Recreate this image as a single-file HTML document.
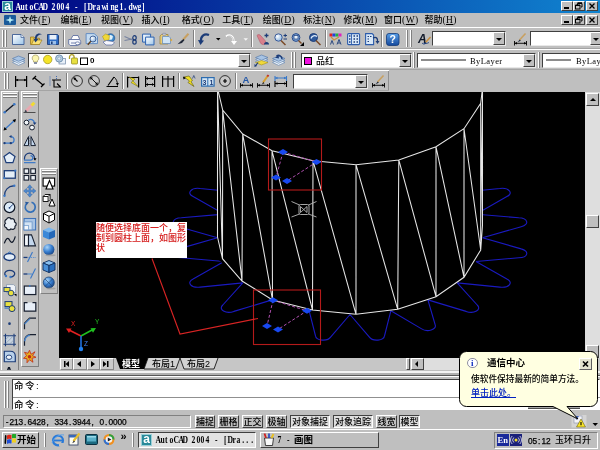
<!DOCTYPE html><html><head><meta charset="utf-8"><title>AutoCAD 2004 - [Drawing1.dwg]</title><style>
*{margin:0;padding:0;box-sizing:border-box}
html,body{width:600px;height:450px;overflow:hidden;background:#bfbfbf}
body{position:relative;font-family:"Liberation Sans","Noto Sans CJK SC",sans-serif;font-size:9px;color:#000;line-height:1;font-weight:500}
.a{position:absolute}
.t{position:absolute;white-space:nowrap;font-size:9px;line-height:10px}
.m{font-family:"Liberation Mono","Noto Sans CJK SC",monospace;font-size:7.5px;transform-origin:0 50%;transform:scaleY(1.25)}
.c{display:inline-block;width:4.5px;text-align:center}
.f{font-family:"Liberation Serif",serif;font-size:9.5px;font-weight:bold}
.f .c{transform:scaleX(0.8)}
.g{font-family:"Liberation Sans",sans-serif;font-size:8.3px;-webkit-text-stroke:0.25px #000}
.r{position:absolute;background:#bfbfbf;border:1px solid;border-color:#fff #404040 #404040 #fff}
.s{position:absolute;border:1px solid;border-color:#808080 #fff #fff #808080}
.cb{position:absolute;background:#fff;border:1px solid;border-color:#404040 #e8e8e8 #e8e8e8 #404040}
.dd{position:absolute;background:#bfbfbf;border:1px solid;border-color:#fff #404040 #404040 #fff}
.dd:after{content:"";position:absolute;left:50%;top:50%;margin:-1px 0 0 -3px;border:3px solid transparent;border-top-color:#000;border-bottom:0}
.gv{position:absolute;width:2px;border-left:1px solid #fff;border-right:1px solid #808080}
.gh{position:absolute;height:2px;border-top:1px solid #fff;border-bottom:1px solid #808080}
.sep{position:absolute;width:2px;border-left:1px solid #808080;border-right:1px solid #fff}
svg{position:absolute;overflow:visible}
</style></head><body><div id="root" style="position:absolute;left:0;top:0;width:600px;height:450px;will-change:transform">
<div class="a" style="left:0;top:0;width:600px;height:13px;background:linear-gradient(90deg,#000080,#1084d0)"></div>
<div class="a" style="left:2px;top:1px;width:11px;height:11px;background:#2a8a9a;border:1px solid #9ad0d8"></div>
<div class="t" style="left:4.300px;top:-1.500px;color:#fff;font-weight:bold;font-size:12px;line-height:14px;font-family:Liberation Sans,sans-serif">a</div>
<div class="t f" style="left:15px;top:1.5px;color:#fff"><span class="c">A</span><span class="c">u</span><span class="c">t</span><span class="c">o</span><span class="c">C</span><span class="c">A</span><span class="c">D</span><span class="c">&nbsp;</span><span class="c">2</span><span class="c">0</span><span class="c">0</span><span class="c">4</span><span class="c">&nbsp;</span><span class="c">-</span><span class="c">&nbsp;</span><span class="c">[</span><span class="c">D</span><span class="c">r</span><span class="c">a</span><span class="c">w</span><span class="c">i</span><span class="c">n</span><span class="c">g</span><span class="c">1</span><span class="c">.</span><span class="c">d</span><span class="c">w</span><span class="c">g</span><span class="c">]</span></div>
<div class="r" style="left:561px;top:1px;width:12px;height:10px"></div>
<div class="a" style="left:564px;top:7px;width:5px;height:2px;background:#000"></div>
<div class="r" style="left:573px;top:1px;width:12px;height:10px"></div>
<svg style="left:573px;top:1px" width="12" height="10"><path d="M4.500 2.500h4.500v3.500h-1M4.500 2.500v1.500" fill="none" stroke="#000" stroke-width="1"/><path d="M4.500 2h4.500" stroke="#000" stroke-width="1.500"/><rect x="2.500" y="4.500" width="4.500" height="3.500" fill="none" stroke="#000" stroke-width="1"/><path d="M2.500 4.200h4.500" stroke="#000" stroke-width="1.500"/></svg>
<div class="r" style="left:586px;top:1px;width:12px;height:10px"></div>
<svg style="left:586px;top:1px" width="12" height="10"><path d="M3.500 2.500l5 5M8.500 2.500l-5 5" stroke="#000" stroke-width="1.300"/></svg>
<div class="a" style="left:4px;top:15px;width:12px;height:10px;background:#1a5a9a;border-radius:1px"></div>
<svg style="left:4px;top:15px" width="12" height="10"><path d="M6 1l1 3l3.500 1l-3.500 1l-1 3l-1-3l-3.500-1l3.500-1z" fill="#b8f0f8"/></svg>
<div class="t" style="left:20.0px;top:15px">文件<span style="font-family:Liberation Serif,serif;font-size:9.5px;letter-spacing:0.4px">(<u>F</u>)</span></div>
<div class="t" style="left:60.5px;top:15px">编辑<span style="font-family:Liberation Serif,serif;font-size:9.5px;letter-spacing:0.4px">(<u>E</u>)</span></div>
<div class="t" style="left:100.9px;top:15px">视图<span style="font-family:Liberation Serif,serif;font-size:9.5px;letter-spacing:0.4px">(<u>V</u>)</span></div>
<div class="t" style="left:141.4px;top:15px">插入<span style="font-family:Liberation Serif,serif;font-size:9.5px;letter-spacing:0.4px">(<u>I</u>)</span></div>
<div class="t" style="left:181.8px;top:15px">格式<span style="font-family:Liberation Serif,serif;font-size:9.5px;letter-spacing:0.4px">(<u>O</u>)</span></div>
<div class="t" style="left:222.2px;top:15px">工具<span style="font-family:Liberation Serif,serif;font-size:9.5px;letter-spacing:0.4px">(<u>T</u>)</span></div>
<div class="t" style="left:262.7px;top:15px">绘图<span style="font-family:Liberation Serif,serif;font-size:9.5px;letter-spacing:0.4px">(<u>D</u>)</span></div>
<div class="t" style="left:303.2px;top:15px">标注<span style="font-family:Liberation Serif,serif;font-size:9.5px;letter-spacing:0.4px">(<u>N</u>)</span></div>
<div class="t" style="left:343.6px;top:15px">修改<span style="font-family:Liberation Serif,serif;font-size:9.5px;letter-spacing:0.4px">(<u>M</u>)</span></div>
<div class="t" style="left:384.1px;top:15px">窗口<span style="font-family:Liberation Serif,serif;font-size:9.5px;letter-spacing:0.4px">(<u>W</u>)</span></div>
<div class="t" style="left:424.5px;top:15px">帮助<span style="font-family:Liberation Serif,serif;font-size:9.5px;letter-spacing:0.4px">(<u>H</u>)</span></div>
<div class="r" style="left:561px;top:15px;width:12px;height:10px"></div>
<div class="a" style="left:564px;top:21px;width:5px;height:2px;background:#000"></div>
<div class="r" style="left:573px;top:15px;width:12px;height:10px"></div>
<svg style="left:573px;top:15px" width="12" height="10"><path d="M4.500 2.500h4.500v3.500h-1M4.500 2.500v1.500" fill="none" stroke="#000" stroke-width="1"/><path d="M4.500 2h4.500" stroke="#000" stroke-width="1.500"/><rect x="2.500" y="4.500" width="4.500" height="3.500" fill="none" stroke="#000" stroke-width="1"/><path d="M2.500 4.200h4.500" stroke="#000" stroke-width="1.500"/></svg>
<div class="r" style="left:586px;top:15px;width:12px;height:10px"></div>
<svg style="left:586px;top:15px" width="12" height="10"><path d="M3.500 2.500l5 5M8.500 2.500l-5 5" stroke="#000" stroke-width="1.300"/></svg>
<div class="a" style="left:0;top:27px;width:600px;height:1px;background:#fff"></div>
<div class="a" style="left:0;top:48px;width:600px;height:1px;background:#a4a4a4"></div>
<div class="a" style="left:0;top:49px;width:600px;height:1px;background:#fff"></div>
<div class="a" style="left:0;top:69px;width:600px;height:1px;background:#a4a4a4"></div>
<div class="a" style="left:388px;top:71px;width:1px;height:19px;background:#909090"></div>
<div class="a" style="left:0;top:70px;width:389px;height:1px;background:#fff"></div>
<div class="a" style="left:0;top:90px;width:389px;height:1px;background:#a4a4a4"></div>
<div class="gv" style="left:2px;top:30px;height:17px"></div>
<div class="gv" style="left:5px;top:30px;height:17px"></div>
<div class="gv" style="left:406px;top:30px;height:17px"></div><div class="gv" style="left:410px;top:30px;height:17px"></div>
<div class="gv" style="left:2px;top:52px;height:16px"></div>
<div class="gv" style="left:5px;top:52px;height:16px"></div>
<div class="gv" style="left:291px;top:52px;height:16px"></div>
<div class="gv" style="left:294px;top:52px;height:16px"></div>
<div class="gv" style="left:413px;top:52px;height:16px"></div>
<div class="gv" style="left:538px;top:52px;height:16px"></div>
<div class="gv" style="left:4px;top:73px;height:16px"></div>
<div class="gv" style="left:7px;top:73px;height:16px"></div>
<div class="sep" style="left:63px;top:30px;height:17px"></div>
<div class="sep" style="left:119px;top:30px;height:17px"></div>
<div class="sep" style="left:193px;top:30px;height:17px"></div>
<div class="sep" style="left:251px;top:30px;height:17px"></div>
<div class="sep" style="left:325px;top:30px;height:17px"></div>
<div class="sep" style="left:381px;top:30px;height:17px"></div>
<div class="sep" style="left:66px;top:73px;height:16px"></div>
<div class="sep" style="left:122px;top:73px;height:16px"></div>
<div class="sep" style="left:178px;top:73px;height:16px"></div>
<div class="sep" style="left:235px;top:73px;height:16px"></div>
<div class="cb" style="left:432px;top:31px;width:74px;height:15px"></div>
<div class="dd" style="left:493px;top:32px;width:12px;height:13px"></div>
<div class="cb" style="left:530px;top:31px;width:73px;height:15px"></div>
<div class="dd" style="left:590px;top:32px;width:12px;height:13px"></div>
<div class="cb" style="left:28px;top:53px;width:223px;height:15px"></div>
<div class="dd" style="left:238px;top:54px;width:12px;height:13px"></div>
<div class="cb" style="left:301px;top:53px;width:111px;height:15px"></div>
<div class="dd" style="left:399px;top:54px;width:12px;height:13px"></div>
<div class="cb" style="left:417px;top:53px;width:119px;height:15px"></div>
<div class="dd" style="left:523px;top:54px;width:12px;height:13px"></div>
<div class="cb" style="left:542px;top:53px;width:70px;height:15px"></div>
<div class="cb" style="left:293px;top:74px;width:75px;height:15px"></div>
<div class="dd" style="left:355px;top:75px;width:12px;height:13px"></div>
<div class="a" style="left:304px;top:57px;width:8px;height:8px;background:#f010e0;border:1px solid #000"></div>
<div class="t" style="left:316px;top:56px">品红</div>
<div class="a" style="left:421px;top:59px;width:45px;height:2px;background:#8c8c8c"></div>
<div class="t m" style="left:470px;top:56px;font-family:'Liberation Serif',serif;font-size:8.5px;transform:none;letter-spacing:0.4px">ByLayer</div>
<div class="a" style="left:546px;top:59px;width:25px;height:2px;background:#8c8c8c"></div>
<div class="t m" style="left:576px;top:56px;font-family:'Liberation Serif',serif;font-size:8.5px;transform:none;letter-spacing:0.4px">ByLayer</div>
<div class="t" style="left:90px;top:56px;font-weight:bold;font-size:8px">0</div>
<div class="a" style="left:0;top:91px;width:59px;height:280px;background:#bfbfbf"></div>
<div class="a" style="left:1px;top:91px;width:18px;height:282px;border:1px solid;border-color:#fff #808080 #808080 #fff"></div>
<div class="gh" style="left:3px;top:93px;width:14px"></div>
<div class="gh" style="left:3px;top:96px;width:14px"></div>
<div class="a" style="left:21px;top:91px;width:18px;height:276px;border:1px solid;border-color:#fff #808080 #808080 #fff"></div>
<div class="gh" style="left:23px;top:93px;width:14px"></div>
<div class="gh" style="left:23px;top:96px;width:14px"></div>
<div class="a" style="left:40px;top:168px;width:18px;height:126px;border:1px solid;border-color:#fff #808080 #808080 #fff"></div>
<div class="gh" style="left:42px;top:170px;width:14px"></div>
<div class="gh" style="left:42px;top:173px;width:14px"></div>
<div class="a" style="left:59px;top:92px;width:526px;height:266px;background:#000"></div>
<svg style="left:0;top:0" width="600" height="450" viewBox="0 0 600 450">
<defs><clipPath id="va"><rect x="59" y="92" width="526" height="266"/></clipPath>
<clipPath id="oc"><path d="M0 0H600V450H0Z M217.5 0V237 222.5 258.7L242.0 281.0L272.5 300.0L312.5 310.0L356.0 314.3L397.7 309.3L436.0 296.7L464.0 277.3L480.7 250.0L482.5 237V0Z" clip-rule="evenodd"/></clipPath></defs>
<g clip-path="url(#va)">
<g clip-path="url(#oc)"><path d="M476.0 214.1L518.7 217.8C528.0 218.1 529.8 224.6 521.2 226.7L482.5 237.8M482.5 237.8L521.2 248.9C529.8 251.0 528.0 257.5 518.7 257.8L476.0 261.5M476.0 261.5L506.9 279.0C514.0 282.5 508.8 288.3 499.8 287.1L457.2 282.9M457.2 282.9L477.2 305.0C482.1 309.6 474.1 314.3 466.1 311.4L427.9 299.9M427.9 299.9L435.1 324.5C437.3 329.7 427.2 332.7 421.2 328.6L390.9 310.7M390.9 310.7L384.6 335.5C384.0 340.9 372.7 341.9 369.2 336.9L350.0 314.5M350.0 314.5L330.8 336.9C327.3 341.9 316.0 340.9 315.4 335.5L309.1 310.7M272.1 299.9L233.9 311.4C225.9 314.3 217.9 309.6 222.8 305.0L242.8 282.9M242.8 282.9L200.2 287.1C191.2 288.3 186.0 282.5 193.1 279.0L224.0 261.5M224.0 261.5L181.3 257.8C172.0 257.5 170.2 251.0 178.8 248.9L217.5 237.8M217.5 237.8L178.8 226.7C170.2 224.6 172.0 218.1 181.3 217.8L224.0 214.1M224.0 214.1L193.1 196.6C186.0 193.1 191.2 187.3 200.2 188.5L242.8 192.7M242.8 192.7L222.8 170.6C217.9 166.0 225.9 161.3 233.9 164.2L272.1 175.7M272.1 175.7L264.9 151.1C262.7 145.9 272.8 142.9 278.8 147.0L309.1 164.9M309.1 164.9L315.4 140.1C316.0 134.7 327.3 133.7 330.8 138.7L350.0 161.1M350.0 161.1L369.2 138.7C372.7 133.7 384.0 134.7 384.6 140.1L390.9 164.9M390.9 164.9L421.2 147.0C427.2 142.9 437.3 145.9 435.1 151.1L427.9 175.7M427.9 175.7L466.1 164.2C474.1 161.3 482.1 166.0 477.2 170.6L457.2 192.7M457.2 192.7L499.8 188.5C508.8 187.3 514.0 193.1 506.9 196.6L476.0 214.1" fill="none" stroke="#1a1ac0" stroke-width="1.1" stroke-linejoin="round"/></g>
<path d="M217.5 88.0L222.7 110.0L242.7 134.0L272.0 150.8L313.0 160.7L356.0 164.7L398.8 159.9L436.0 146.8L464.0 128.7L480.7 103.3L482.5 88.0M217.5 237.0L222.5 258.7L242.0 281.0L272.5 300.0L312.5 310.0L356.0 314.3L397.7 309.3L436.0 296.7L464.0 277.3L480.7 250.0L482.5 225.0M217.5 88.0L217.5 237.0M222.7 110.0L222.5 258.7M242.7 134.0L242.0 281.0M272.0 150.8L272.5 300.0M313.0 160.7L312.5 310.0M356.0 164.7L356.0 314.3M398.8 159.9L397.7 309.3M436.0 146.8L436.0 296.7M464.0 128.7L464.0 277.3M480.7 103.3L480.7 250.0M482.5 88.0L482.5 225.0M217.5 88.0L222.5 258.7M222.7 110.0L242.0 281.0M242.7 134.0L272.5 300.0M272.0 150.8L312.5 310.0M313.0 160.7L356.0 314.3M356.0 164.7L397.7 309.3M398.8 159.9L436.0 296.7M436.0 146.8L464.0 277.3M464.0 128.7L480.7 250.0M480.7 103.3L482.5 225.0" fill="none" stroke="#e6e6e6" stroke-width="1.05"/>
<g fill="none" stroke="#b8b8b8" stroke-width="0.9"><rect x="299" y="204.5" width="10" height="10" rx="1.5"/><path d="M299.5 205l-8-3.500M308.500 205l8-3.500M299.500 214l-8 3M308.500 214l8 3M300.500 206.500l6.500 6v-6l-6.500 6z"/></g>
<g fill="none" stroke="#b41a1a" stroke-width="1.1"><rect x="268.5" y="139" width="53" height="51"/><rect x="253.500" y="290" width="67" height="54.500"/></g><path d="M152 258.500L180 334L258 318.500" fill="none" stroke="#d82424" stroke-width="1.1"/>
<g fill="none" stroke="#b050b0" stroke-width="1" stroke-dasharray="3 2"><path d="M283 152L316.500 162L287 181M283 152L276 177.500M273 300.300L307 310.800L278 329.500M273 300.300L267 326"/></g>
<path d="M278.0 152.0l5 -3l5 3l-5 3zM311.5 162.0l5 -3l5 3l-5 3zM271.0 177.5l5 -3l5 3l-5 3zM282.0 181.0l5 -3l5 3l-5 3zM268.0 300.3l5 -3l5 3l-5 3zM302.0 310.8l5 -3l5 3l-5 3zM262.0 326.0l5 -3l5 3l-5 3zM273.0 329.5l5 -3l5 3l-5 3z" fill="#1848f0"/>
<g stroke-width="1.6" fill="none"><path d="M81 336L69 330" stroke="#e02020"/><path d="M81 336L92 330" stroke="#20c020"/><path d="M81 336V349" stroke="#2070e0"/></g>
<path d="M66 328.500l5.500 0l-2.500 4.500z" fill="#e02020"/><path d="M96 328l-5.500 0.300l2.500 4.500z" fill="#20c020"/><circle cx="81" cy="349" r="2.200" fill="#2080f0"/>
<g font-family="Liberation Sans,sans-serif" font-size="6.500"><text x="71" y="326" fill="#e02020">X</text><text x="95" y="324" fill="#20c020">Y</text><text x="84" y="346" fill="#4080f0">Z</text></g>
</g>
</svg>
<div class="a" style="left:96px;top:222px;width:91px;height:36px;background:#fff"></div>
<div class="t" style="left:96px;top:223px;color:#d41414;font-weight:500;font-size:9px;line-height:10px;white-space:normal;width:92px;letter-spacing:0px">随便选择底面一个，复<br>制到圆柱上面，如图形<br>状</div>
<svg style="left:0;top:0" width="600" height="450" viewBox="0 0 600 450">
<defs><linearGradient id="pg" x1="0" y1="0" x2="1" y2="1"><stop offset="0" stop-color="#ffffff"/><stop offset="1" stop-color="#9cc4e8"/></linearGradient><radialGradient id="lens" cx="0.35" cy="0.35" r="0.7"><stop offset="0" stop-color="#ffffff"/><stop offset="1" stop-color="#8ab4e0"/></radialGradient><linearGradient id="bl" x1="0" y1="0" x2="0" y2="1"><stop offset="0" stop-color="#5aa0e8"/><stop offset="1" stop-color="#14489c"/></linearGradient><radialGradient id="sph" cx="0.35" cy="0.3" r="0.8"><stop offset="0" stop-color="#a8d4f8"/><stop offset="0.500" stop-color="#3a80d0"/><stop offset="1" stop-color="#123c7c"/></radialGradient><clipPath id="tbc"><rect x="0" y="92" width="59" height="279"/></clipPath></defs>
<g transform="translate(12,34)"><path d="M0.500 0.500h8.500l3 3v7h-11.500z" fill="url(#pg)" stroke="#3c5c94" stroke-width="0.900"/><path d="M9 0.500v3h3" fill="#e8f0fa" stroke="#3c5c94" stroke-width="0.700"/></g>
<g transform="translate(30,33)"><path d="M0.500 4h3.500l1 1.200h4.500v6.300h-9z" fill="#e8c448" stroke="#907018" stroke-width="0.700"/><path d="M1.500 11.500l2-4.500h8.500l-2.500 4.500z" fill="#f8e078" stroke="#907018" stroke-width="0.600"/><path d="M12 1.500c-3.500-2.500-7.500 0-7 4.500l-1.800-0.800l2.300 4.300l3-3.800l-1.700 0.200c-0.300-2.500 2-4.500 5.200-4.400z" fill="#1c3c78"/></g>
<g transform="translate(47,34)"><path d="M0.500 0.500h10l1 1v9h-11z" fill="#2e6cc4" stroke="#1c3c78" stroke-width="0.9"/><rect x="2.500" y="1" width="7" height="4.500" fill="#e8f0fa"/><rect x="3" y="7" width="6" height="3.500" fill="#9cc0ea"/><rect x="4" y="7.500" width="1.600" height="2.500" fill="#1c3c78"/></g>
<g transform="translate(68,35)"><path d="M3 4l2-3.500h5l1.500 3.500" fill="#fff" stroke="#52649a" stroke-width="0.8"/><path d="M0.700 4.500h11l1 2v2.500l-3.500 1.500h-7l-1.500-1.500z" fill="#f4f6fc" stroke="#52649a" stroke-width="0.8"/><path d="M3 8h6.500" stroke="#52649a" stroke-width="0.8"/><ellipse cx="9.500" cy="8.300" rx="2.200" ry="1.400" fill="#fff" stroke="#52649a" stroke-width="0.7"/></g>
<g transform="translate(85.5,33)"><path d="M0.600 0.600h8l3.400 3v7h-11.400z" fill="#c4dcf2" stroke="#5a86c0" stroke-width="0.9"/><circle cx="7.500" cy="6" r="3" fill="url(#lens)" stroke="#3a5a90" stroke-width="0.9"/><path d="M5.300 8.300l-3 3.500" stroke="#604020" stroke-width="1.400"/></g>
<g transform="translate(102,33)"><circle cx="8.500" cy="5" r="4.300" fill="#3a86c8" stroke="#1c4c8c" stroke-width="0.6"/><path d="M6 3a3 3 0 0 1 5 0.500l-1 3l-3 0.500z" fill="#dff0fa"/><path d="M0.500 3.500l3-2.500l4 1.500l-0.500 4.500l-4.500 0.500z" fill="#f0d838" stroke="#a08a10" stroke-width="0.5"/><path d="M1 9l3.500-1.500l6.500 1l1.500 1.500l-2.500 2h-6z" fill="#f6f6fc" stroke="#5a6aa0" stroke-width="0.7"/></g>
<g transform="translate(124,35)"><path d="M0.500 1.500l8 3.500M0.500 5.500l8-1.500" stroke="#7884a0" stroke-width="1.100"/><ellipse cx="10.500" cy="2.800" rx="1.700" ry="2.200" fill="none" stroke="#1c3c78" stroke-width="1.200"/><ellipse cx="10.500" cy="7" rx="1.700" ry="2.200" fill="none" stroke="#1c3c78" stroke-width="1.200"/></g>
<g transform="translate(142,33.5)"><path d="M0.600 0.600h8v8h-8z" fill="url(#pg)" stroke="#2c62b0" stroke-width="1"/><path d="M3.600 3.600h8.400v7.800h-8.400z" fill="url(#pg)" stroke="#2c62b0" stroke-width="1"/></g>
<g transform="translate(159,33)"><path d="M2.500 1.500h6.500v9.500h-8v-8z" fill="#e8cc78" stroke="#9a8030" stroke-width="0.7"/><rect x="3.500" y="0.300" width="3.500" height="2" rx="0.800" fill="#c8ccd8" stroke="#6a7088" stroke-width="0.500"/><path d="M3.500 3.500h6.500l1.500 1.500v5.500h-8z" fill="#cfe4f6" stroke="#5a86c0" stroke-width="0.7"/><path d="M11.500 5.500l2 1.500l-2 1.500z" fill="#e8a820"/></g>
<g transform="translate(177,33)"><path d="M11.500 0.800l-5.500 6" stroke="#c8a060" stroke-width="2"/><path d="M6.500 6l-2 1.500l-4 3.800l4.500-1.300l2.500-3z" fill="#202838"/></g>
<g transform="translate(198,33.5)"><path d="M11 1.500c-5-2-8.500 1.500-8 6" fill="none" stroke="#1c3c78" stroke-width="2.200"/><path d="M0 6.500l6 0.500l-3.500 4.500z" fill="#1c3c78"/></g>
<g transform="translate(216,38)"><path d="M0 0h4.500l-2.250 2.500z" fill="#000"/></g>
<g transform="translate(225,34)"><path d="M1 2.500c4-3 8 0 7.500 5" fill="none" stroke="#fff" stroke-width="2"/><path d="M1.800 3c3.500-2.500 7 0 6.500 4.500" fill="none" stroke="#b0b0b0" stroke-width="0.8"/><path d="M6 7l6 0l-3 4z" fill="#fff"/></g>
<g transform="translate(243.5,38.3)"><path d="M0 0h4.500l-2.250 2.500z" fill="#f4f4f4"/></g>
<g transform="translate(256,33)"><path d="M1 2.500c1-1.500 3-1 4 0.500l4 4.500c1 1.500 1 3-0.500 3.800c-1.500 0.700-3 0-4-1.300z" fill="#d8808c" stroke="#b05868" stroke-width="0.6"/><path d="M8.500 2.500h4M10.500 0.500v4" stroke="#1c3c78" stroke-width="1.300"/><path d="M8 11.500a2.500 2.500 0 0 1 5 0z" fill="#1c3c78"/></g>
<g transform="translate(274,33)"><circle cx="4.500" cy="4.500" r="3.700" fill="url(#lens)" stroke="#3a5a98" stroke-width="1"/><path d="M7 7.500l4.500 4.500" stroke="#7a4a28" stroke-width="1.500"/><path d="M9.500 2.500h3.500M11.200 0.800v3.400M9.500 6h3.500" stroke="#1c3c78" stroke-width="1"/></g>
<g transform="translate(291,33)"><circle cx="5" cy="4.500" r="3.900" fill="#7aa4d8" stroke="#2a4a88" stroke-width="1"/><rect x="3" y="2.500" width="4" height="3.500" fill="#e8f2fc" stroke="#1c3c78" stroke-width="0.7"/><path d="M7.500 7.500l3 3" stroke="#7a4a28" stroke-width="1.400"/><path d="M13 9v4h-4z" fill="#000"/></g>
<g transform="translate(308,33)"><circle cx="5.500" cy="4.500" r="4" fill="#2e5a9c" stroke="#1c3c78" stroke-width="1"/><path d="M3 5.500c1-3 4-3.500 6-2" fill="none" stroke="#e0ecfa" stroke-width="1.300"/><path d="M8 7.500l4.500 4.500" stroke="#7a4a28" stroke-width="1.500"/></g>
<g transform="translate(329,33)"><rect x="0.500" y="0.500" width="3" height="3" fill="#e02020"/><rect x="3.500" y="0.500" width="3" height="3" fill="#2040e0"/><rect x="6.500" y="0.500" width="3" height="3" fill="#20b040"/><rect x="9.500" y="0.500" width="3" height="3" fill="#e020c0"/><path d="M2 4l3 3l5-3" fill="none" stroke="#c89040" stroke-width="1.300"/><path d="M1.500 11.500l1.500-4l1.500 4M8 11.500l2-5l2 5M8.800 10h2.400" fill="none" stroke="#1c3c78" stroke-width="0.9"/></g>
<g transform="translate(347,33)"><rect x="0.600" y="0.600" width="12" height="11" rx="1" fill="#d8e8f8" stroke="#2c5cac" stroke-width="1.100"/><path d="M4.500 1v10.500" stroke="#2c5cac" stroke-width="0.9"/><path d="M2 3h1.500M2 6h1.500M2 9h1.500M6.500 3h1.500M9.500 3h1.500M6.500 6h1.500M9.500 6h1.500M6.500 9h1.500M9.500 9h1.500" stroke="#1c3c78" stroke-width="1.400"/></g>
<g transform="translate(365,33)"><path d="M0.600 0.600h6.500l1.500 1.500v9.500h-8z" fill="#d8e8f8" stroke="#2c5cac" stroke-width="1.100"/><path d="M2.500 3.500h1.500M2.500 6h1.500M2.500 8.500h1.500M5 3.500h1.500" stroke="#1c3c78" stroke-width="1.200"/><path d="M8 5c3-1.500 5 0 4.500 3.500" fill="none" stroke="#1c3c78" stroke-width="1.300"/><path d="M10.500 8h4l-2 3z" fill="#1c3c78"/></g>
<g transform="translate(386,33)"><rect x="0.500" y="0.500" width="12.500" height="12" rx="2.500" fill="url(#bl)" stroke="#103878" stroke-width="0.8"/><text x="6.700" y="10.300" text-anchor="middle" font-family="Liberation Sans,sans-serif" font-weight="bold" font-size="10.500" fill="#fff">?</text></g>
<g transform="translate(418,33)"><text x="0" y="10" font-family="Liberation Sans,sans-serif" font-size="12" font-weight="bold" font-style="italic" fill="#101828">A</text><path d="M12.500 4l-5 5.500" stroke="#c89040" stroke-width="1.500"/><path d="M7.500 9l-2.500 3l3.500-1.500z" fill="#1c3c78"/><path d="M4 10.500c2-1 4 1 7-1" fill="none" stroke="#1c3c78" stroke-width="0.8"/></g>
<g transform="translate(514,33)"><path d="M11.500 0.500l-6 6.500" stroke="#c8a060" stroke-width="1.600"/><path d="M5.800 6.500l-2.300 2.800l3.300-1.600z" fill="#202838"/><path d="M0.500 8v4.500M12.500 8v4.500M0.500 10.300h12" stroke="#000" stroke-width="0.9"/><path d="M0.500 10.300l2.500-1.300v2.600zM12.500 10.300l-2.500-1.300v2.600z" fill="#000"/></g>
<g transform="translate(372,75)"><path d="M11.500 0.500l-6 6.500" stroke="#c8a060" stroke-width="1.600"/><path d="M5.800 6.500l-2.300 2.800l3.300-1.600z" fill="#202838"/><path d="M0.500 8v4.500M12.500 8v4.500M0.500 10.300h12" stroke="#000" stroke-width="0.9"/><path d="M0.500 10.300l2.500-1.300v2.600zM12.500 10.300l-2.500-1.300v2.600z" fill="#000"/></g>
<g transform="translate(12,55)"><path d="M0.500 7.500l6-2.500l6.500 2.500l-6.500 2.800z" fill="#f4f8fc" stroke="#6a8cb8" stroke-width="0.7"/><path d="M0.500 5.500l6-2.500l6.500 2.500l-6.500 2.800z" fill="#cfe0f2" stroke="#6a8cb8" stroke-width="0.7"/><path d="M0.500 3.500l6-2.500l6.500 2.500l-6.500 2.800z" fill="#a8c4e4" stroke="#5a7cac" stroke-width="0.7"/></g>
<g transform="translate(32,54.5)"><path d="M3.500 0.500a3.200 3.200 0 0 1 2 5.800v1.200h-4v-1.200a3.200 3.200 0 0 1 2-5.800z" fill="#fbf6b0" stroke="#a09860" stroke-width="0.7"/><rect x="2" y="7.500" width="3" height="2" fill="#8890a0"/></g>
<g transform="translate(43,55)"><circle cx="4.700" cy="4.500" r="4.200" fill="#f4e428" stroke="#a89c20" stroke-width="0.8"/></g>
<g transform="translate(55,54.5)"><rect x="4" y="4" width="6.500" height="5.500" fill="#e8f0f8" stroke="#7088a8" stroke-width="0.7"/><circle cx="4.200" cy="4" r="3.600" fill="#b8d0e4" stroke="#6888a8" stroke-width="0.9"/><circle cx="4.200" cy="4" r="1.600" fill="#dce8f2" stroke="#7898b8" stroke-width="0.600"/></g>
<g transform="translate(68,54)"><path d="M1.500 5v-2a2.300 2.300 0 0 1 4.600 0v1" fill="none" stroke="#b0a028" stroke-width="1.300"/><rect x="3.500" y="4" width="6" height="6" rx="0.800" fill="#e8e040" stroke="#8a8418" stroke-width="0.700"/></g>
<g transform="translate(80,57.5)"><rect x="0.500" y="0.500" width="7" height="6.500" fill="#fff" stroke="#000" stroke-width="1"/></g>
<g transform="translate(255,54)"><path d="M0.500 7.500l6-2.500l6.500 2.500l-6.500 2.800z" fill="#f4f8fc" stroke="#6a8cb8" stroke-width="0.7"/><path d="M0.500 5.500l6-2.500l6.500 2.500l-6.500 2.800z" fill="#cfe0f2" stroke="#6a8cb8" stroke-width="0.7"/><path d="M0.500 3.500l6-2.500l6.500 2.500l-6.500 2.800z" fill="#a8c4e4" stroke="#5a7cac" stroke-width="0.7"/><path d="M0.500 8.500l6-2l6.500 2l-6.500 2.500z" fill="#f0d838" stroke="#a89420" stroke-width="0.600"/><path d="M3 8.500l-2.500 3.500" stroke="#1c3c78" stroke-width="1.200"/><path d="M-0.500 10l0 3l2.500-1z" fill="#1c3c78"/></g>
<g transform="translate(272,55)"><path d="M0.500 7.500l6-2.500l6.500 2.500l-6.500 2.800z" fill="#f4f8fc" stroke="#6a8cb8" stroke-width="0.7"/><path d="M0.500 5.500l6-2.500l6.500 2.500l-6.500 2.800z" fill="#cfe0f2" stroke="#6a8cb8" stroke-width="0.7"/><path d="M0.500 3.500l6-2.500l6.500 2.500l-6.500 2.800z" fill="#a8c4e4" stroke="#5a7cac" stroke-width="0.7"/><path d="M10 4c0-3-3-4.500-5.500-3" fill="none" stroke="#1c3c78" stroke-width="1.500"/><path d="M3 2.800l3.500-2.800l0.500 3.500z" fill="#1c3c78"/></g>
<g transform="translate(15,76)"><path d="M0.600 0v11M11.600 0v11M0.600 4h11" stroke="#000" stroke-width="1.200"/><path d="M0.600 4l2.500-1.300v2.600zM11.600 4l-2.500-1.300v2.600z" fill="#000"/></g>
<g transform="translate(32,76)"><path d="M2 1.500l9 7.500" stroke="#000" stroke-width="1.200"/><path d="M0.500 3.500l3.500-3.500M9 11l3.500-3.500" stroke="#000" stroke-width="1.300"/></g>
<g transform="translate(49,75.5)"><path d="M1 1v10M7.500 0.500v4" stroke="#4068b0" stroke-width="1" stroke-dasharray="1 1"/><path d="M3 4.500h9M5 4.500v7h7M8 8l3.500 3.500" fill="none" stroke="#000" stroke-width="1.100"/></g>
<g transform="translate(71,75)"><circle cx="6" cy="6" r="5.400" fill="#c8c8c8" stroke="#202020" stroke-width="0.9"/><path d="M6.500 6.500l-3.500-3.500" stroke="#000" stroke-width="1.100"/><path d="M2.300 2.300l3 0.800l-2.200 2.200z" fill="#000"/></g>
<g transform="translate(88,75)"><circle cx="6" cy="6" r="5.400" fill="#c8c8c8" stroke="#202020" stroke-width="0.9"/><path d="M2.500 2.500l7 7" stroke="#000" stroke-width="0.900"/><path d="M2 2l3 0.800l-2.200 2.200zM10 10l-3-0.800l2.200-2.200z" fill="#000"/></g>
<g transform="translate(106,76)"><path d="M0.500 10.500h11.500M2 9.500l6-8.500" fill="none" stroke="#000" stroke-width="1.200"/><path d="M8 1c2.500 2 3.500 5 3.500 8" fill="none" stroke="#000" stroke-width="0.9"/><path d="M11.500 10l-1.500-3h2.800z" fill="#000"/></g>
<g transform="translate(127,75.5)"><path d="M0.600 1v11M11.600 1v11M0.600 2h11" stroke="#000" stroke-width="1.200"/><path d="M2 1.500l6 2l-2 2l5 5.500l-7-4l2-1.500z" fill="#f0e020" stroke="#6a6410" stroke-width="0.500"/></g>
<g transform="translate(145,76)"><path d="M0.600 0v11M9.600 0v11M0.600 2.500h9M0.600 8.500h9" stroke="#000" stroke-width="1.200"/><path d="M2.500 1.200v2.600M7.500 1.200v2.600M2.500 7.200v2.600M7.500 7.200v2.600" stroke="#000" stroke-width="0.800"/></g>
<g transform="translate(162,76)"><path d="M0.600 0v11M6 0v11M11.600 0v11M0.600 3h11" stroke="#000" stroke-width="1.200"/></g>
<g transform="translate(183,75)"><path d="M1 2l5-1l3.500 4.500l-1.500 1l3 5l-6-4l1.500-1.500z" fill="#f0e020" stroke="#5a5410" stroke-width="0.600"/><path d="M0 1.500l3 1.500l-2.500 1.500z" fill="#000"/><path d="M9.500 3.500l1.300-3l1.300 3" fill="none" stroke="#1c3c78" stroke-width="0.700"/></g>
<g transform="translate(201,77)"><rect x="0.600" y="0.600" width="12.500" height="8.500" fill="#d4e6f6" stroke="#2c6cb0" stroke-width="1.200"/><path d="M6.800 0.600v8.500" stroke="#2c6cb0" stroke-width="1"/><text x="1.500" y="7.500" font-family="Liberation Sans,sans-serif" font-size="7" font-weight="bold" fill="#1c3c78">3</text><text x="8.500" y="7.500" font-family="Liberation Sans,sans-serif" font-size="7" font-weight="bold" fill="#1c3c78">1</text></g>
<g transform="translate(219,75)"><circle cx="6" cy="6" r="5.400" fill="#c8c8c8" stroke="#202020" stroke-width="0.9"/><path d="M4 6h4M6 4v4" stroke="#000" stroke-width="1.200"/></g>
<g transform="translate(240,75)"><text x="2.500" y="7.500" font-family="Liberation Sans,sans-serif" font-size="9.500" font-weight="bold" fill="#2458a8">A</text><path d="M0.500 8.100000000000001 v4.500M12.500 8.100000000000001 v4.500M0.500 10.3 h12" stroke="#000" stroke-width="0.9"/><path d="M0.500 10.3 l2.500-1.300v2.600zM12.500 10.3 l-2.500-1.300v2.600z" fill="#000"/></g>
<g transform="translate(257,75)"><path d="M11 0.500l-5 7" stroke="#d8a030" stroke-width="2"/><path d="M6.300 7l-1.500 2.500l2.700-1.300z" fill="#202020"/><path d="M11.500 0l-1.200 1.500" stroke="#c03030" stroke-width="2"/><path d="M0.500 8.100000000000001 v4.500M12.500 8.100000000000001 v4.500M0.500 10.3 h12" stroke="#000" stroke-width="0.9"/><path d="M0.500 10.3 l2.500-1.300v2.600zM12.500 10.3 l-2.500-1.300v2.600z" fill="#000"/></g>
<g transform="translate(274,75)"><path d="M1 1v5M12.500 1v5M1 3h11.500" stroke="#3878c8" stroke-width="1.100"/><path d="M1 3l2.500-1.300v2.600zM12.500 3l-2.500-1.300v2.600z" fill="#3878c8"/><path d="M1 6v6M12.500 6v6M1 8.500h11.500" stroke="#000" stroke-width="1.100"/><path d="M1 8.500l2.500-1.300v2.600zM12.500 8.500l-2.500-1.300v2.600z" fill="#000"/></g>
<g transform="translate(3.5,102.0)"><path d="M1 10.500l10-8.500" stroke="#101828" stroke-width="1.300"/><circle cx="1.200" cy="10.300" r="1.300" fill="#3a78c8"/><circle cx="10.800" cy="2.200" r="1.300" fill="#3a78c8"/></g>
<g transform="translate(3.5,118.55)"><path d="M1 11l10.500-9.500" stroke="#3a78c8" stroke-width="1.300"/><path d="M0 12l1-3.500l2.500 2.500zM12.500 0.500l-1 3.500l-2.500-2.500z" fill="#000"/></g>
<g transform="translate(3.5,135.1)"><path d="M0.800 8h6.500a3.200 3.200 0 0 0 0-6.500" fill="none" stroke="#3a78c8" stroke-width="1.300"/><circle cx="1" cy="8" r="1.200" fill="#1c3c78"/><circle cx="7.300" cy="8" r="1.200" fill="#1c3c78"/><path d="M5.500 1.500l2.500-1.500v3z" fill="#1c3c78"/></g>
<g transform="translate(3.5,151.65)"><path d="M6 0.800l5.500 4l-2.100 6.200h-6.800l-2.100-6.200z" fill="#e4eef8" stroke="#1c3c78" stroke-width="1.200"/></g>
<g transform="translate(3.5,168.2)"><rect x="0.800" y="2.500" width="11" height="7.500" fill="#e4eef8" stroke="#1c3c78" stroke-width="1.300"/><circle cx="0.800" cy="10" r="1.100" fill="#3a78c8"/><circle cx="11.800" cy="2.500" r="1.100" fill="#3a78c8"/></g>
<g transform="translate(3.5,184.75)"><path d="M1 11c0-5.500 3.500-9.500 9.500-10" fill="none" stroke="#1c3c78" stroke-width="1.300"/><circle cx="1" cy="11" r="1.200" fill="#3a78c8"/><circle cx="10.800" cy="1" r="1.200" fill="#3a78c8"/></g>
<g transform="translate(3.5,201.3)"><circle cx="6" cy="6" r="5.300" fill="#dcebf8" stroke="#101828" stroke-width="1.200"/><path d="M6 6.500l3.500-3.500" stroke="#1c3c78" stroke-width="1"/><circle cx="6" cy="6.500" r="0.900" fill="#1c3c78"/></g>
<g transform="translate(3.5,217.85000000000002)"><path d="M3 1.500a2.500 2.500 0 0 1 4.500-0.500a2.500 2.500 0 0 1 3.500 3a2.500 2.500 0 0 1 0.500 4.500a2.500 2.500 0 0 1-4 2.500a2.500 2.500 0 0 1-4.500-1a2.500 2.500 0 0 1-1-4.500a2.500 2.500 0 0 1 1-4z" fill="#e8eef4" stroke="#182030" stroke-width="1.200"/></g>
<g transform="translate(3.5,234.4)"><path d="M0.800 9c2-6 4-6 5.500-3s3.500 3 5.500-4" fill="none" stroke="#101828" stroke-width="1.200"/></g>
<g transform="translate(3.5,250.95000000000005)"><ellipse cx="6" cy="6" rx="5.500" ry="3.500" fill="#e4eef8" stroke="#1c3c78" stroke-width="1.400"/><path d="M4 2.500l2-1.500l2 1.500" fill="none" stroke="#3a78c8" stroke-width="1"/></g>
<g transform="translate(3.5,267.5)"><path d="M2 8a5 3.300 0 1 1 5 1.500" fill="none" stroke="#1c3c78" stroke-width="1.300"/><circle cx="2.500" cy="8.500" r="1.200" fill="#3a78c8"/><circle cx="7" cy="9.500" r="1.200" fill="#3a78c8"/></g>
<g transform="translate(3.5,284.05)"><path d="M3 0.500h7l2 2v6h-9z" fill="#eef2f8" stroke="#8090a8" stroke-width="0.700"/><rect x="0.500" y="3.500" width="6" height="4" fill="#e8e040" stroke="#1c3c78" stroke-width="0.900"/><circle cx="7.500" cy="9" r="2.800" fill="#e8e040" stroke="#1c3c78" stroke-width="0.900"/><path d="M10.500 10l2.500 0l0 2.500z" fill="#000"/></g>
<g transform="translate(3.5,300.6)"><rect x="1.500" y="1" width="7" height="5" fill="#e8e040" stroke="#1c3c78" stroke-width="1"/><circle cx="8.500" cy="8" r="3" fill="#e8e040" stroke="#1c3c78" stroke-width="1"/><path d="M1 7.500h4" stroke="#3a78c8" stroke-width="1.200"/></g>
<g transform="translate(3.5,317.15)"><circle cx="6" cy="6.500" r="1.300" fill="#1c3c78"/></g>
<g transform="translate(3.5,333.70000000000005)"><rect x="2" y="2" width="8.500" height="8.500" fill="#c8d4e0"/><path d="M2 0v12.500M10.500 0v12.500M0 2h12.500M0 10.500h12.500" stroke="#1c3c78" stroke-width="1.100"/><path d="M2 6l4-4M2 10l8-8M6 10.500l4.500-4.500" stroke="#8090a8" stroke-width="0.600"/></g>
<g transform="translate(3.5,350.25)"><path d="M0.800 1h6c3 0 5 2 5 5v5.500h-11z" fill="#b8d0ea" stroke="#1c3c78" stroke-width="1.200"/><ellipse cx="5.500" cy="7" rx="2.800" ry="2.200" fill="#eef4fa" stroke="#1c3c78" stroke-width="0.900"/></g>
<text x="5" y="374.500" font-family="Liberation Sans,sans-serif" font-size="11" font-weight="bold" fill="#101828" clip-path="url(#tbc)">A</text>
<g transform="translate(23.5,102.0)"><path d="M0 10.500h12" stroke="#303030" stroke-width="0.800"/><path d="M2.500 9l7-7" stroke="#e8a8b0" stroke-width="3"/><path d="M8 3.500l2.800-2.800" stroke="#f0dc30" stroke-width="3"/><path d="M1 10.200l1-2.500l1.800 1.800z" fill="#384050"/></g>
<g transform="translate(23.5,118.55)"><circle cx="3" cy="4" r="2.400" fill="#f0f4f8" stroke="#182030" stroke-width="1"/><circle cx="8.500" cy="9" r="2.400" fill="#f0f4f8" stroke="#182030" stroke-width="1"/><path d="M5 1.500c3-1.500 5.500 0 6 3" fill="none" stroke="#3a78c8" stroke-width="1.300"/><path d="M9.500 4h3.500l-2 2.500z" fill="#1c3c78"/></g>
<g transform="translate(23.5,135.1)"><path d="M5 1.500v9h-4.500zM7.500 1.500v9h4.500z" fill="#c4d8ee" stroke="#182030" stroke-width="1"/><path d="M6.250 0v12.500" stroke="#5070a0" stroke-width="0.700" stroke-dasharray="1.500 1"/></g>
<g transform="translate(23.5,151.65)"><path d="M1 8v-1.500a5 5 0 0 1 10 0v1.500" fill="none" stroke="#1c3c78" stroke-width="1.200"/><path d="M0.500 8.500h6.500a2.300 2.300 0 0 0 0-4.600" fill="none" stroke="#3a78c8" stroke-width="1.200"/><path d="M0.500 11h11.500" stroke="#3a78c8" stroke-width="1.200"/><path d="M10 6.500l1.500 2.500l1.500-2.500z" fill="#000"/></g>
<g transform="translate(23.5,168.2)"><g fill="#eef2f6" stroke="#182030" stroke-width="1.100"><rect x="0.600" y="0.600" width="4.600" height="4.600"/><rect x="7.300" y="0.600" width="4.600" height="4.600"/><rect x="0.600" y="7.300" width="4.600" height="4.600"/><rect x="7.300" y="7.300" width="4.600" height="4.600"/></g></g>
<g transform="translate(23.5,184.75)"><path d="M6.250 0l2.500 3h-1.700v2.400h2.400v-1.700l3 2.500l-3 2.500v-1.700h-2.400v2.400h1.700l-2.500 3l-2.500-3h1.700v-2.400h-2.400v1.700l-3-2.500l3-2.500v1.700h2.400v-2.400h-1.700z" fill="#4a88d0" stroke="#2a5a9c" stroke-width="0.400"/></g>
<g transform="translate(23.5,201.3)"><path d="M3 2.500a5 5 0 1 0 5-1.500" fill="none" stroke="#3470b8" stroke-width="1.700"/><path d="M1.500 0.500l4 0.500l-2.500 3z" fill="#2a5a9c"/></g>
<g transform="translate(23.5,217.85000000000002)"><rect x="0.600" y="0.600" width="11.500" height="11.500" fill="#a8c4e4" stroke="#3a70b8" stroke-width="1"/><rect x="0.600" y="4" width="8" height="8" fill="#d4e4f4" stroke="#6a94c8" stroke-width="0.800"/><rect x="0.600" y="7.500" width="4.500" height="4.500" fill="#f4f8fc" stroke="#6a94c8" stroke-width="0.700"/></g>
<g transform="translate(23.5,234.4)"><path d="M1 0.500h4v11h-4z" fill="#f4f8fc" stroke="#182030" stroke-width="1.100"/><path d="M5 0.500h3l4 11h-7z" fill="#c4d8ee" stroke="#182030" stroke-width="1.100"/></g>
<g transform="translate(23.5,250.95000000000005)"><path d="M0 6.500h4" stroke="#1c3c78" stroke-width="1.300"/><path d="M5 6.500h7.500" stroke="#5a90d0" stroke-width="1.100" stroke-dasharray="1.300 1"/><path d="M4 11l5-10" stroke="#3a78c8" stroke-width="1.100"/></g>
<g transform="translate(23.5,267.5)"><path d="M0 6.500h4" stroke="#1c3c78" stroke-width="1.300"/><path d="M4 6.500h4.500" stroke="#5a90d0" stroke-width="1.100"/><path d="M7 11l5-10" stroke="#3a78c8" stroke-width="1.100"/></g>
<g transform="translate(23.5,284.05)"><rect x="0.800" y="2" width="11.500" height="8.500" fill="#e8eff8" stroke="#182030" stroke-width="1.200"/><rect x="5.500" y="1" width="1.500" height="1.500" fill="#3a78c8"/></g>
<g transform="translate(23.5,300.6)"><path d="M4 2h-3.200v8.500h11.500v-8.500h-3.300" fill="#e8eff8" stroke="#182030" stroke-width="1.200"/></g>
<g transform="translate(23.5,317.15)"><path d="M1 12v-6l5-5h6.500" fill="none" stroke="#182030" stroke-width="1.200"/><path d="M1 7l5.500-5.500" stroke="#4a88d0" stroke-width="1.300"/></g>
<g transform="translate(23.5,333.70000000000005)"><path d="M1 12v-5a6 6 0 0 1 6-6h5.500" fill="none" stroke="#182030" stroke-width="1.200"/><path d="M1.300 7.500a6 6 0 0 1 5.200-6" fill="none" stroke="#4a88d0" stroke-width="1.400"/></g>
<g transform="translate(23.5,350.25)"><path d="M6 0l1.500 4l4-2.500l-2.500 4l3.500 1.500l-4 1l1 4l-3.500-2.500l-2.500 3l0-4l-3.500-0.500l3-2.500l-2-3.500l3.500 1z" fill="#e8b020" stroke="#c02818" stroke-width="0.800"/><circle cx="6" cy="6.500" r="1.800" fill="#c02818"/></g>
<g transform="translate(42.5,177.5)"><rect x="0.600" y="0.600" width="11.500" height="8" fill="#fff" stroke="#000" stroke-width="1.100"/><path d="M7 3l3.500 8.500h-7z" fill="#fff" stroke="#000" stroke-width="1.100"/></g>
<g transform="translate(42.5,194.0)"><path d="M0.600 2.500l2-2h5v5l-2 2h-5zM0.600 2.500h5v5M5.600 2.500l2-2" fill="#fff" stroke="#000" stroke-width="0.900"/><path d="M9.500 5l3 7h-6z" fill="#fff" stroke="#000" stroke-width="1"/></g>
<g transform="translate(42.5,210.5)"><path d="M6.500 0.500l5.500 2.500v6.500l-5.500 3l-5.500-3v-6.500z" fill="#fff" stroke="#000" stroke-width="1"/><path d="M1 3l5.500 2.800l5.500-2.800M6.500 5.800v6.700" fill="none" stroke="#000" stroke-width="1"/></g>
<g transform="translate(42.5,227.0)"><path d="M0.500 3l6-2.500l6 2.500l-6 2.500z" fill="#7ab8f0"/><path d="M0.500 3l6 2.500v7l-6-2.500z" fill="#3a88d8"/><path d="M12.500 3l-6 2.500v7l6-2.500z" fill="#2468b8"/></g>
<g transform="translate(42.5,243.5)"><circle cx="6.300" cy="6" r="5.600" fill="url(#sph)"/><ellipse cx="8" cy="11.800" rx="5" ry="1" fill="#909090" opacity="0.600"/></g>
<g transform="translate(42.5,260.0)"><path d="M0.500 3l6-2.500l6 2.500l-6 2.500z" fill="#8ac0f0" stroke="#103060" stroke-width="0.900"/><path d="M0.500 3l6 2.500v7l-6-2.500z" fill="#4a90d8" stroke="#103060" stroke-width="0.900"/><path d="M12.500 3l-6 2.500v7l6-2.500z" fill="#2a70c0" stroke="#103060" stroke-width="0.900"/></g>
<g transform="translate(42.5,276.5)"><circle cx="6.300" cy="6" r="5.500" fill="url(#sph)" stroke="#204878" stroke-width="0.800"/><path d="M2.500 2.500l7.500 7.500M10 2.500l-7.500 7.500" stroke="#204878" stroke-width="0.700"/><ellipse cx="8.500" cy="12" rx="4.500" ry="0.900" fill="#909090" opacity="0.600"/></g>

</svg>
<div class="a" style="left:585px;top:92px;width:15px;height:266px;background:#dedede"></div>
<div class="r" style="left:586px;top:93px;width:13px;height:13px"></div>
<div class="a" style="left:590px;top:98px;border:3px solid transparent;border-bottom-color:#000;border-top:0"></div>
<div class="r" style="left:586px;top:215px;width:13px;height:13px"></div>
<div class="r" style="left:586px;top:345px;width:13px;height:13px"></div>
<div class="a" style="left:59px;top:358px;width:541px;height:13px;background:#c6c6c6"></div>
<div class="r" style="left:59.5px;top:358px;width:13.5px;height:12px;border-color:#fff #8a8a8a #8a8a8a #fff;background:#cccccc"></div>
<div class="r" style="left:73.0px;top:358px;width:13.5px;height:12px;border-color:#fff #8a8a8a #8a8a8a #fff;background:#cccccc"></div>
<div class="r" style="left:86.5px;top:358px;width:13.5px;height:12px;border-color:#fff #8a8a8a #8a8a8a #fff;background:#cccccc"></div>
<div class="r" style="left:100.0px;top:358px;width:13.5px;height:12px;border-color:#fff #8a8a8a #8a8a8a #fff;background:#cccccc"></div>
<svg style="left:59px;top:358px" width="56" height="12"><g fill="#000"><path d="M5 3h1.5v6H5zM10 3v6l-3.5-3zM22 3v6l-4-3zM32 3v6l4-3zM44 3v6l3.5-3zM48 3h1.5v6H48z"/></g></svg>
<svg style="left:114px;top:358px" width="110" height="13"><path d="M2 0h32l-4 11h-24z" fill="#000"/><path d="M34 0l-4 11h32l4-11M66 0l4 11h30l4-11" fill="#d2d2d2" stroke="#000" stroke-width="0.8"/></svg>
<div class="t" style="left:122px;top:359px;color:#fff;font-weight:bold">模型</div>
<div class="t" style="left:152px;top:359px">布局1</div>
<div class="t" style="left:187px;top:359px">布局2</div>
<div class="r" style="left:406px;top:358px;width:4px;height:12px"></div>
<div class="r" style="left:411px;top:358px;width:13px;height:12px"></div>
<div class="a" style="left:415px;top:361px;border:3px solid transparent;border-right-color:#000;border-left:0"></div>
<div class="a" style="left:424px;top:358px;width:161px;height:12px;background:#dedede"></div>
<div class="a" style="left:0;top:370px;width:600px;height:8px;background:#bfbfbf"></div>
<div class="a" style="left:0;top:371px;width:600px;height:2px;background:#f4f4f4"></div>
<div class="a" style="left:0;top:373px;width:600px;height:2px;background:#b0b0b0"></div>
<div class="a" style="left:0;top:375px;width:600px;height:1px;background:#585858"></div>
<div class="a" style="left:0;top:376px;width:600px;height:1px;background:#fff"></div>
<div class="gv" style="left:4px;top:381px;height:27px"></div><div class="gv" style="left:7px;top:381px;height:27px"></div>
<div class="a" style="left:12px;top:379px;width:588px;height:31px;background:#fff;border:1px solid;border-color:#404040 #fff #fff #404040"></div>
<div class="a" style="left:13px;top:397px;width:587px;height:1px;background:#909090"></div>
<div class="t" style="left:14px;top:381px;font-size:9.5px;letter-spacing:1.5px">命令:</div>
<div class="t" style="left:14px;top:400px;font-size:9.5px;letter-spacing:1.5px">命令:</div>
<div class="s" style="left:3px;top:415px;width:188px;height:13px"></div>
<div class="t g" style="left:5px;top:417px"><span class="c">-</span><span class="c">2</span><span class="c">1</span><span class="c">3</span><span class="c">.</span><span class="c">6</span><span class="c">4</span><span class="c">2</span><span class="c">8</span><span class="c">,</span><span class="c">&nbsp;</span><span class="c">3</span><span class="c">3</span><span class="c">4</span><span class="c">.</span><span class="c">3</span><span class="c">9</span><span class="c">4</span><span class="c">4</span><span class="c">,</span><span class="c">&nbsp;</span><span class="c">0</span><span class="c">.</span><span class="c">0</span><span class="c">0</span><span class="c">0</span><span class="c">0</span></div>
<div class="r" style="left:195px;top:415px;width:20px;height:13px"></div>
<div class="t" style="left:195px;top:417px;width:20px;text-align:center">捕捉</div>
<div class="r" style="left:218px;top:415px;width:21px;height:13px"></div>
<div class="t" style="left:218px;top:417px;width:21px;text-align:center">栅格</div>
<div class="r" style="left:242px;top:415px;width:21px;height:13px"></div>
<div class="t" style="left:242px;top:417px;width:21px;text-align:center">正交</div>
<div class="r" style="left:266px;top:415px;width:21px;height:13px"></div>
<div class="t" style="left:266px;top:417px;width:21px;text-align:center">极轴</div>
<div class="a" style="left:290px;top:415px;width:40px;height:13px;background:#dedede;border:1px solid;border-color:#404040 #fff #fff #404040"></div>
<div class="t" style="left:290px;top:417px;width:40px;text-align:center">对象捕捉</div>
<div class="a" style="left:333px;top:415px;width:40px;height:13px;background:#dedede;border:1px solid;border-color:#404040 #fff #fff #404040"></div>
<div class="t" style="left:333px;top:417px;width:40px;text-align:center">对象追踪</div>
<div class="r" style="left:376px;top:415px;width:21px;height:13px"></div>
<div class="t" style="left:376px;top:417px;width:21px;text-align:center">线宽</div>
<div class="a" style="left:399px;top:415px;width:21px;height:13px;background:#dedede;border:1px solid;border-color:#404040 #fff #fff #404040"></div>
<div class="t" style="left:399px;top:417px;width:21px;text-align:center">模型</div>
<div class="a" style="left:0;top:429px;width:600px;height:1px;background:#fff"></div>
<div class="r" style="left:2px;top:432px;width:37px;height:16px"></div>
<div class="t" style="left:17px;top:435px;font-weight:bold;font-size:9.5px">开始</div>
<svg style="left:0;top:428px" width="400" height="22" viewBox="0 428 400 22"><g transform="translate(5,434)"><path d="M0 1l1.500 0.500l-0.500 8.500l-1.500-0.500z" fill="#000"/><path d="M2 1.500c2-1.500 3 0 4.500-0.800v4c-1.500 0.800-2.500-0.700-4.500 0.800z" fill="#e02818"/><path d="M7 0.500c1.500-1 2.500 0 4 -0.500v4c-1.500 0.500-2.500-0.500-4 0.500z" fill="#20a828"/><path d="M2 6c2-1.500 3 0 4.500-0.800v4c-1.500 0.800-2.500-0.700-4.500 0.800z" fill="#2050d8"/><path d="M7 5c1.500-1 2.500 0 4 -0.500v4c-1.500 0.500-2.500-0.500-4 0.500z" fill="#f0d020"/></g><g transform="translate(52,434)"><ellipse cx="6" cy="6.500" rx="5" ry="4.800" fill="none" stroke="#2a7ad8" stroke-width="2.200"/><path d="M2 6.500h9" stroke="#2a7ad8" stroke-width="1.800"/><path d="M7 9h5v3h-5z" fill="#bfbfbf"/><path d="M0 9c2-6 8-9 12-8" fill="none" stroke="#5aa0e8" stroke-width="1"/></g><g transform="translate(68,433)"><rect x="1" y="2" width="9" height="10" fill="#fcfcf4" stroke="#384868" stroke-width="0.900"/><rect x="1" y="2" width="9" height="2.500" fill="#3868b8"/><path d="M11.500 0.500l-6 7.500" stroke="#e8c030" stroke-width="2.200"/><path d="M5.800 7.500l-1.600 2.800l2.800-1.600z" fill="#282828"/></g><g transform="translate(85,434)"><rect x="0.500" y="0.500" width="12" height="10" rx="1.200" fill="#1c6a80" stroke="#0c3040" stroke-width="1"/><rect x="2" y="2" width="9" height="5.500" fill="#5ab0c8"/><rect x="2" y="2" width="9" height="1.500" fill="#9ad8e8"/></g><g transform="translate(103,433)"><circle cx="6" cy="6.500" r="5.500" fill="#f09020"/><path d="M6 1a5.500 5.500 0 0 1 5.500 5.500h-5.500z" fill="#30a040"/><path d="M6 12a5.500 5.500 0 0 1-5.500-5.500h5.500z" fill="#3070d0"/><circle cx="6" cy="6.500" r="3.300" fill="#f4f4f4"/><path d="M4.800 4.500l3.500 2l-3.500 2z" fill="#202020"/></g></svg>
<div class="gv" style="left:44px;top:433px;height:14px"></div>
<div class="t" style="left:120.5px;top:431px;font-weight:bold;font-size:11px">»</div>
<div class="gv" style="left:132px;top:433px;height:14px"></div>
<div class="a" style="left:138px;top:432px;width:118px;height:16px;background:#e2e2e2;border:1px solid;border-color:#404040 #fff #fff #404040"></div>
<div class="a" style="left:141px;top:434px;width:11px;height:12px;background:#2a8a9a;border:1px solid #9ad0d8"></div>
<div class="t" style="left:143.300px;top:432px;color:#fff;font-weight:bold;font-size:12px;line-height:14px;font-family:Liberation Sans,sans-serif">a</div>
<div class="t f" style="left:155px;top:435px"><span class="c">A</span><span class="c">u</span><span class="c">t</span><span class="c">o</span><span class="c">C</span><span class="c">A</span><span class="c">D</span><span class="c">&nbsp;</span><span class="c">2</span><span class="c">0</span><span class="c">0</span><span class="c">4</span><span class="c">&nbsp;</span><span class="c">-</span><span class="c">&nbsp;</span><span class="c">[</span><span class="c">D</span><span class="c">r</span><span class="c">a</span><span class="c">.</span><span class="c">.</span><span class="c">.</span></div>
<div class="r" style="left:260px;top:432px;width:119px;height:16px"></div>
<svg style="left:263px;top:433px" width="13" height="14"><path d="M1.500 5h9l-1 7.500h-7z" fill="#f8f8f8" stroke="#303030" stroke-width="0.900"/><path d="M3 5l-1.500-4.500" stroke="#d02020" stroke-width="1.800"/><path d="M6 5v-4.500" stroke="#2040c0" stroke-width="1.600"/><path d="M8.500 5l2-4" stroke="#e8c020" stroke-width="1.800"/></svg>
<div class="t f" style="left:277px;top:435px"><span class="c">7</span><span class="c">&nbsp;</span><span class="c">-</span></div>
<div class="t" style="left:294px;top:435px;font-weight:bold;font-size:9.5px">画图</div>
<div class="s" style="left:494px;top:432px;width:104px;height:17px"></div>
<div class="a" style="left:497px;top:434px;width:12px;height:12px;background:#1a2a9a"></div>
<div class="t" style="left:497.5px;top:435px;color:#fff;font-size:8.5px;font-weight:bold;font-family:'Liberation Serif',serif">En</div>
<div class="a" style="left:510px;top:434px;width:12px;height:12px;background:#1a207a"></div>
<svg style="left:510px;top:434px" width="12" height="12"><circle cx="6" cy="6" r="1.500" fill="#f0d830"/><path d="M3.800 3.500a3.500 3.500 0 0 0 0 5M8.200 3.500a3.500 3.500 0 0 1 0 5M2.200 2a5.500 5.500 0 0 0 0 8M9.800 2a5.500 5.500 0 0 1 0 8" fill="none" stroke="#e8e8f0" stroke-width="0.800"/></svg>
<div class="t g" style="left:528px;top:436px"><span class="c">0</span><span class="c">5</span><span class="c">:</span><span class="c">1</span><span class="c">2</span></div>
<div class="t" style="left:555px;top:435px">玉环日升</div>
<svg style="left:571px;top:412px" width="29" height="17"><rect x="0.500" y="3" width="15" height="12.500" fill="#d4d4d4"/><rect x="3" y="4" width="8" height="7" fill="#f4f4f8" stroke="#8890a8" stroke-width="0.600"/><path d="M3 4h5l-2.500 4z" fill="#4a68b8"/><path d="M5.500 15l4.500-8l4.500 8z" fill="#f8e428" stroke="#504800" stroke-width="0.500"/><path d="M10 10v3.300" stroke="#000" stroke-width="1.100"/><path d="M21.500 11h5.500l-2.750 3z" fill="#000"/></svg>
<svg style="left:0;top:0" width="600" height="450"><path d="M528 408.300h52" stroke="#505050" stroke-width="1.500"/><path d="M466.5 351.5h124a7 7 0 0 1 7 7v41a7 7 0 0 1 -7 7h-23.500l11 12.500l-25-12.500h-86.500a7 7 0 0 1 -7-7v-41a7 7 0 0 1 7-7z" fill="#ffffe1" stroke="#000" stroke-width="1"/></svg>
<div class="a" style="left:467px;top:358px;width:11px;height:10px;border-radius:5px;background:#fff;border:1px solid #9090a0"></div>
<div class="t" style="left:471px;top:358px;color:#1030c0;font-weight:bold;font-family:'Liberation Serif',serif;font-size:9px">i</div>
<div class="t" style="left:487px;top:358px;font-weight:bold;font-size:9.5px">通信中心</div>
<div class="a" style="left:579px;top:358px;width:13px;height:12px;background:#e4e4d0;border:1px solid;border-color:#fff #606060 #606060 #fff"></div>
<svg style="left:579px;top:358px" width="13" height="12"><path d="M4 3.5l5 5M9 3.5l-5 5" stroke="#000" stroke-width="1.6"/></svg>
<div class="t" style="left:471px;top:374px;font-size:8.7px">使软件保持最新的简单方法。</div>
<div class="t" style="left:471px;top:388px;font-size:9px;color:#0020c0;text-decoration:underline">单击此处。</div>
</div></body></html>
